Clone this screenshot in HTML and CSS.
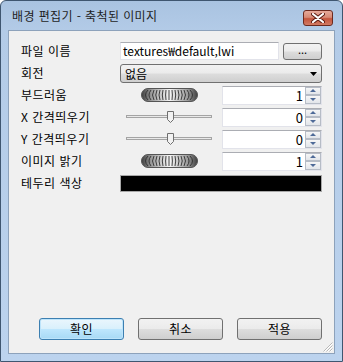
FILE: index.html
```html
<!DOCTYPE html>
<html lang="ko">
<head>
<meta charset="utf-8">
<link rel="stylesheet" href="styles.css">
</head>
<body>
<div class="window">
  <div class="titlebar">
    <span class="title">배경 편집기 - 축척된 이미지</span>
    <span class="close">
      <svg width="14" height="10" viewBox="0 0 14 10"><path d="M2 1 L12 9 M12 1 L2 9" stroke="#5a1a10" stroke-width="4" stroke-linecap="round"/><path d="M2 1 L12 9 M12 1 L2 9" stroke="#fff" stroke-width="2.2" stroke-linecap="round"/></svg>
    </span>
  </div>
  <div class="client">
    <div class="form">
      <div class="row">
        <span class="label">파일 이름</span>
        <div class="ctrl file">
          <span class="textbox fname">textures₩default,lwi</span>
          <span class="btn small">...</span>
        </div>
      </div>
      <div class="row">
        <span class="label">회전</span>
        <div class="ctrl">
          <span class="combo">없음<svg class="arrow" width="7" height="4" viewBox="0 0 7 4"><path d="M0 0 H7 L3.5 4 Z" fill="#000"/></svg></span>
        </div>
      </div>
      <div class="row">
        <span class="label">부드러움</span>
        <div class="ctrl split">
          <div class="widget"><svg class="knob" width="57" height="14" viewBox="0 0 57 14"><defs><linearGradient id="kg1" x1="0" x2="1" y1="0" y2="0"><stop offset="0" stop-color="#3e3e3e"/><stop offset="0.18" stop-color="#9c9c9c"/><stop offset="0.5" stop-color="#f6f6f6"/><stop offset="0.82" stop-color="#9c9c9c"/><stop offset="1" stop-color="#3e3e3e"/></linearGradient></defs><rect x="0.5" y="0.5" width="56" height="13" rx="6.5" fill="url(#kg1)" stroke="#555"/><g fill="none" stroke="#2e2e2e" stroke-width="0.9"><path d="M7 2 Q2 7 7 12"/><path d="M10 2 Q6 7 10 12"/><path d="M13 2 Q10 7 13 12"/><path d="M16 2 Q13.5 7 16 12"/><path d="M19 2 Q17 7 19 12"/><path d="M22 2 Q20.6 7 22 12"/><path d="M25 2 Q24.2 7 25 12"/><path d="M28 2 L28 12"/><path d="M31 2 Q31.8 7 31 12"/><path d="M34 2 Q35.4 7 34 12"/><path d="M37 2 Q39 7 37 12"/><path d="M40 2 Q42.5 7 40 12"/><path d="M43 2 Q46 7 43 12"/><path d="M46 2 Q50 7 46 12"/><path d="M49 2 Q54 7 49 12"/></g></svg></div>
          <span class="spin"><span class="val">1</span><span class="spinbtns"><span class="sb up"></span><span class="sb down"></span></span></span>
        </div>
      </div>
      <div class="row">
        <span class="label">X 간격띄우기</span>
        <div class="ctrl split">
          <div class="widget"><svg class="slider" width="86" height="13" viewBox="0 0 86 13"><rect x="0.5" y="4.5" width="85" height="2" fill="#e9e9e9" stroke="#a4a4a4"/><path d="M41.5 0.5 H47.5 V8.5 L44.5 11.5 L41.5 8.5 Z" fill="#f2f2f2" stroke="#6f6f6f"/></svg></div>
          <span class="spin"><span class="val">0</span><span class="spinbtns"><span class="sb up"></span><span class="sb down"></span></span></span>
        </div>
      </div>
      <div class="row">
        <span class="label">Y 간격띄우기</span>
        <div class="ctrl split">
          <div class="widget"><svg class="slider" width="86" height="13" viewBox="0 0 86 13"><rect x="0.5" y="4.5" width="85" height="2" fill="#e9e9e9" stroke="#a4a4a4"/><path d="M41.5 0.5 H47.5 V8.5 L44.5 11.5 L41.5 8.5 Z" fill="#f2f2f2" stroke="#6f6f6f"/></svg></div>
          <span class="spin"><span class="val">0</span><span class="spinbtns"><span class="sb up"></span><span class="sb down"></span></span></span>
        </div>
      </div>
      <div class="row">
        <span class="label">이미지 밝기</span>
        <div class="ctrl split">
          <div class="widget"><svg class="knob" width="57" height="14" viewBox="0 0 57 14"><defs><linearGradient id="kg2" x1="0" x2="1" y1="0" y2="0"><stop offset="0" stop-color="#3e3e3e"/><stop offset="0.18" stop-color="#9c9c9c"/><stop offset="0.5" stop-color="#f6f6f6"/><stop offset="0.82" stop-color="#9c9c9c"/><stop offset="1" stop-color="#3e3e3e"/></linearGradient></defs><rect x="0.5" y="0.5" width="56" height="13" rx="6.5" fill="url(#kg2)" stroke="#555"/><g fill="none" stroke="#2e2e2e" stroke-width="0.9"><path d="M7 2 Q2 7 7 12"/><path d="M10 2 Q6 7 10 12"/><path d="M13 2 Q10 7 13 12"/><path d="M16 2 Q13.5 7 16 12"/><path d="M19 2 Q17 7 19 12"/><path d="M22 2 Q20.6 7 22 12"/><path d="M25 2 Q24.2 7 25 12"/><path d="M28 2 L28 12"/><path d="M31 2 Q31.8 7 31 12"/><path d="M34 2 Q35.4 7 34 12"/><path d="M37 2 Q39 7 37 12"/><path d="M40 2 Q42.5 7 40 12"/><path d="M43 2 Q46 7 43 12"/><path d="M46 2 Q50 7 46 12"/><path d="M49 2 Q54 7 49 12"/></g></svg></div>
          <span class="spin"><span class="val">1</span><span class="spinbtns"><span class="sb up"></span><span class="sb down"></span></span></span>
        </div>
      </div>
      <div class="row">
        <span class="label">테두리 색상</span>
        <div class="ctrl">
          <span class="color"></span>
        </div>
      </div>
    </div>
    <div class="buttons">
      <span class="btn big default">확인</span>
      <span class="btn big">취소</span>
      <span class="btn big">적용</span>
    </div>
    <svg class="grip" width="11" height="11" viewBox="0 0 11 11"><g stroke="#b8b8b8" stroke-width="1"><path d="M10.5 1.5 L1.5 10.5"/><path d="M10.5 4.5 L4.5 10.5"/><path d="M10.5 7.5 L7.5 10.5"/></g><g stroke="#fff" stroke-width="1"><path d="M10.5 2.5 L2.5 10.5"/><path d="M10.5 5.5 L5.5 10.5"/><path d="M10.5 8.5 L8.5 10.5"/></g></svg>
  </div>
</div>
</body>
</html>
```

FILE: styles.css
```css
html, body {
  margin: 0;
  padding: 0;
  background: #ffffff;
}
body {
  width: 343px;
  height: 362px;
  overflow: hidden;
  font-family: "Noto Sans CJK KR", "Noto Sans", sans-serif;
  font-size: 12px;
  color: #000;
}
.window {
  box-sizing: border-box;
  width: 343px;
  height: 362px;
  border: 1px solid #3f5670;
  border-radius: 6px 6px 0 0;
  background: linear-gradient(to bottom, #a9c3e1 0px, #b3cbe7 30px, #bcd3ee 100%);
  display: flex;
  flex-direction: column;
  padding: 0 7px 7px 7px;
}
.titlebar {
  height: 29px;
  display: flex;
  justify-content: space-between;
  align-items: flex-start;
  padding-left: 4px;
  padding-right: 2px;
}
.title {
  margin-top: 6px;
  font-size: 12px;
  line-height: 18px;
  letter-spacing: 0.4px;
  color: #1e1e1e;
}
.close {
  margin-top: 9px;
  width: 30px;
  height: 16px;
  box-sizing: border-box;
  border: 1px solid #6c2a1f;
  border-radius: 3px;
  background: linear-gradient(to bottom, #e6aa9b 0%, #d78a76 45%, #c4553d 55%, #d17a63 100%);
  display: flex;
  align-items: center;
  justify-content: center;
}
.client {
  flex: 1;
  position: relative;
  background: #f0f0f0;
  border: 1px solid #8da2bb;
  display: flex;
  flex-direction: column;
  padding: 11px 12px 13px 12px;
}
.form {
  display: flex;
  flex-direction: column;
  gap: 4px;
}
.row {
  display: flex;
  align-items: center;
  height: 18px;
}
.label {
  width: 99px;
  line-height: 16px;
  letter-spacing: 0.5px;
  white-space: nowrap;
}
.ctrl {
  flex: 1;
  display: flex;
  align-items: center;
  height: 18px;
}
.file {
  gap: 4px;
}
.textbox {
  box-sizing: border-box;
  height: 18px;
  background: #fff;
  border: 1px solid #e2e3ea;
  border-top-color: #abadb3;
  display: flex;
  align-items: center;
}
.fname {
  width: 159px;
  padding-left: 2px;
  line-height: 14px;
  white-space: nowrap;
  overflow: hidden;
}
.btn {
  box-sizing: border-box;
  border: 1px solid #707070;
  border-radius: 3px;
  background: linear-gradient(to bottom, #f2f2f2 0%, #ebebeb 49%, #dddddd 51%, #cfcfcf 100%);
  display: flex;
  align-items: center;
  justify-content: center;
  white-space: nowrap;
}
.small {
  width: 39px;
  height: 17px;
  font-size: 11px;
  line-height: 11px;
  padding-bottom: 3px;
}
.combo {
  box-sizing: border-box;
  width: 202px;
  height: 19px;
  margin-top: 1px;
  border: 1px solid #707070;
  border-radius: 3px;
  background: linear-gradient(to bottom, #f2f2f2 0%, #ebebeb 49%, #dddddd 51%, #cfcfcf 100%);
  display: flex;
  align-items: center;
  justify-content: space-between;
  padding: 0 4px 0 4px;
}
.split {
  justify-content: space-between;
}
.widget {
  width: 102px;
  display: flex;
  align-items: center;
}
.knob {
  margin-left: 21px;
}
.slider {
  margin-left: 6px;
}
.spin {
  box-sizing: border-box;
  width: 100px;
  height: 19px;
  background: #fff;
  border: 1px solid #e2e3ea;
  border-top-color: #abadb3;
  display: flex;
  align-items: stretch;
  justify-content: flex-end;
}
.val {
  line-height: 17px;
  font-size: 13px;
  padding-right: 2px;
}
.spinbtns {
  width: 16px;
  display: flex;
  flex-direction: column;
}
.sb {
  flex: 1;
  box-sizing: border-box;
  border: 1px solid #b6bcc6;
  background: linear-gradient(to bottom, #f6f6f6, #e2e5ea);
  display: flex;
  align-items: center;
  justify-content: center;
}
.up::after {
  content: "";
  border-left: 3px solid transparent;
  border-right: 3px solid transparent;
  border-bottom: 3px solid #4e6a98;
}
.down::after {
  content: "";
  border-left: 3px solid transparent;
  border-right: 3px solid transparent;
  border-top: 3px solid #4e6a98;
}
.color {
  box-sizing: border-box;
  width: 202px;
  height: 17px;
  background: #000;
  border: 1px solid #a8a8a8;
}
.buttons {
  margin-top: auto;
  display: flex;
  justify-content: flex-end;
  gap: 14px;
}
.big {
  width: 85px;
  height: 22px;
  line-height: 14px;
  letter-spacing: 0.5px;
}
.default {
  border-color: #3c7fb1;
  background: linear-gradient(to bottom, #eaf6fd 0%, #d9f0fc 49%, #bee6fd 51%, #a7d9f5 100%);
  box-shadow: inset 0 0 0 1px #bde4fb;
}
.grip {
  position: absolute;
  right: 1px;
  bottom: 1px;
}
```
